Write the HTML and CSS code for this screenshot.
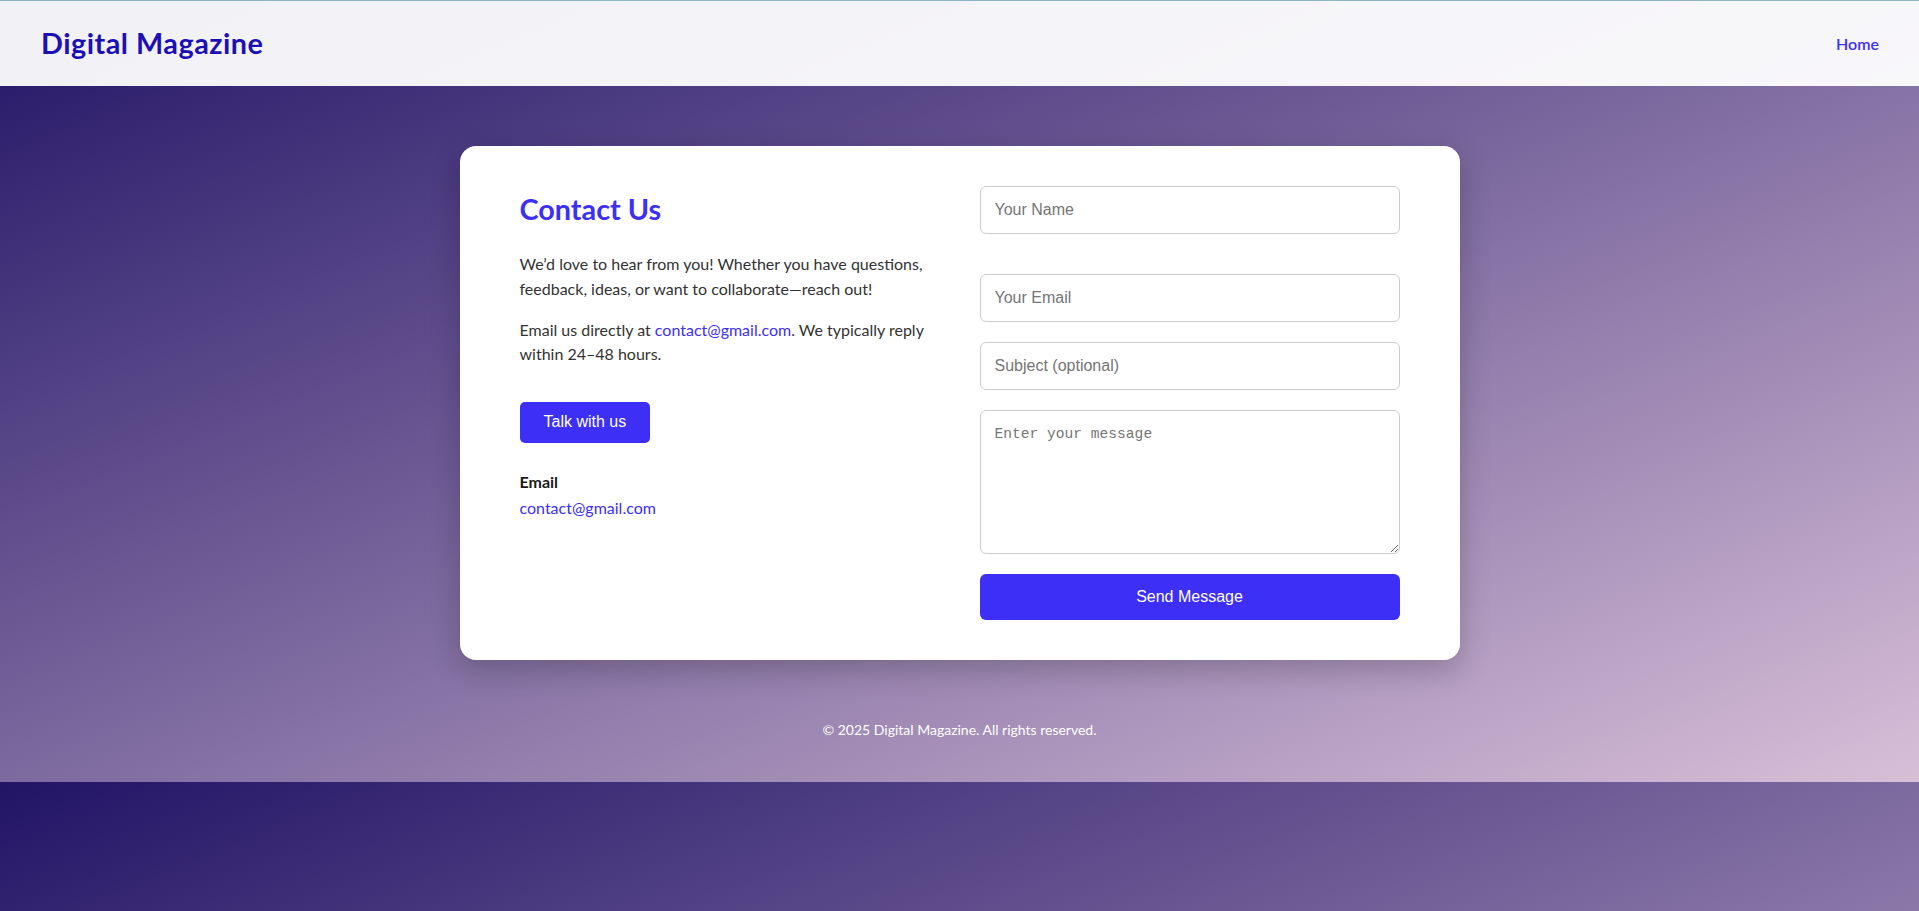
FILE: index.html
```html
<!DOCTYPE html>
<html lang="en">
<head>
<meta charset="utf-8">
<title>Contact Us - Digital Magazine</title>
<link rel="stylesheet" href="styles.css">
</head>
<body>
<header class="site-header">
  <a class="logo" href="#">Digital Magazine</a>
  <nav class="nav"><a href="#" class="nav-link">Home</a></nav>
</header>
<main class="main">
  <section class="card">
    <div class="info">
      <h2 class="title">Contact Us</h2>
      <p class="text">We’d love to hear from you! Whether you have questions, feedback, ideas, or want to collaborate—reach out!</p>
      <p class="text">Email us directly at <a href="#" class="link">contact@gmail.com</a>. We typically reply within 24–48 hours.</p>
      <div class="actions"><button class="btn talk-btn">Talk with us</button></div>
      <div class="contact-detail">
        <div class="detail-label">Email</div>
        <a href="#" class="link">contact@gmail.com</a>
      </div>
    </div>
    <form class="form">
      <input class="field field-name" type="text" placeholder="Your Name">
      <input class="field" type="email" placeholder="Your Email">
      <input class="field" type="text" placeholder="Subject (optional)">
      <textarea class="field message" placeholder="Enter your message"></textarea>
      <button type="button" class="btn send-btn">Send Message</button>
    </form>
  </section>
</main>
<footer class="footer">© 2025 Digital Magazine. All rights reserved.</footer>
</body>
</html>
```
FILE: styles.css
```css
body {
  margin: 0;
  font-family: "Lato", "Noto Sans", sans-serif;
  line-height: 1.6;
  color: #333;
  background: linear-gradient(to bottom right, #221466, #d8bfd8);
}

.site-header {
  height: 85px;
  border-top: 1px solid #8bb8bf;
  padding: 0 40px 0 41px;
  display: flex;
  align-items: center;
  justify-content: space-between;
  background: rgba(255, 255, 255, 0.94);
}

.logo {
  font-size: 28.8px;
  font-weight: 700;
  letter-spacing: 0.5px;
  color: #1c0fb4;
  text-decoration: none;
}

.nav-link {
  font-size: 16px;
  font-weight: 600;
  color: #3d2ff5;
  text-decoration: none;
}

.main {
  display: flex;
  justify-content: center;
  padding: 60px 0 40px;
}

.card {
  width: 1000px;
  box-sizing: border-box;
  padding: 40px 60px;
  background: #fff;
  border-radius: 16px;
  box-shadow: 0 10px 30px rgba(0, 0, 0, 0.22);
  display: grid;
  grid-template-columns: 1fr 1fr;
  gap: 40px;
}

.title {
  margin: 0 0 20px;
  font-size: 28.8px;
  font-weight: 700;
  color: #3d2ff5;
}

.text {
  margin: 0 0 16px;
  font-size: 16px;
  line-height: 24.8px;
}

.link {
  color: #3d2ff5;
  text-decoration: none;
}

.actions {
  padding-top: 19px;
}

.btn {
  border: none;
  color: #fff;
  background: #3d2ff5;
  font-family: "Liberation Sans", Arial, sans-serif;
  font-size: 16px;
  cursor: pointer;
}

.talk-btn {
  padding: 11px 24px 12px;
  border-radius: 5px;
}

.contact-detail {
  margin-top: 26px;
  font-size: 16px;
}

.detail-label {
  font-weight: 700;
  color: #1a1a1a;
}

.form {
  display: flex;
  flex-direction: column;
}

.field {
  box-sizing: border-box;
  width: 100%;
  height: 48px;
  margin: 0 0 20px;
  padding: 12px 14px;
  border: 1px solid #ccc;
  border-radius: 6px;
  font-family: "Liberation Sans", Arial, sans-serif;
  font-size: 16px;
  color: #333;
  background: #fff;
}

.field::placeholder {
  color: #757575;
}

.field-name {
  margin-bottom: 40px;
}

.message {
  height: 144px;
  padding: 15px 14px;
  font-family: "Liberation Mono", monospace;
  font-size: 14.6px;
  resize: vertical;
}

.send-btn {
  height: 46px;
  border-radius: 6px;
}

.footer {
  text-align: center;
  color: #fff;
  font-size: 14px;
  padding: 19px 0 41px;
}
```
